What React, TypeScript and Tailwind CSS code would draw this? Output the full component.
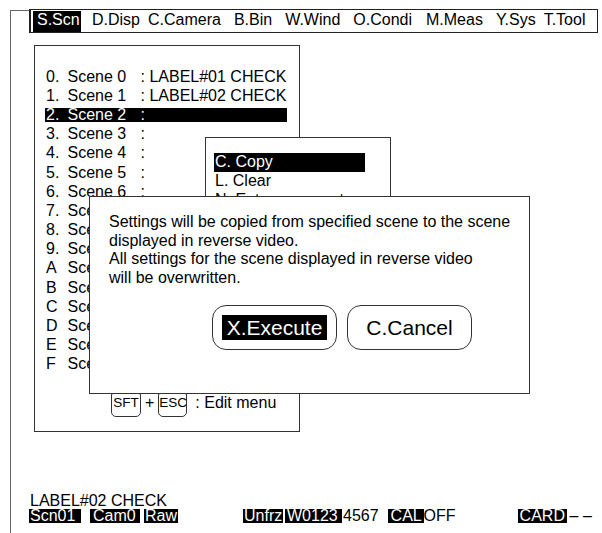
import React from "react";

const rows: { n: string; name: string; label: string }[] = [
  { n: "0.", name: "Scene 0", label: "LABEL#01 CHECK" },
  { n: "1.", name: "Scene 1", label: "LABEL#02 CHECK" },
  { n: "2.", name: "Scene 2", label: "" },
  { n: "3.", name: "Scene 3", label: "" },
  { n: "4.", name: "Scene 4", label: "" },
  { n: "5.", name: "Scene 5", label: "" },
  { n: "6.", name: "Scene 6", label: "" },
  { n: "7.", name: "Scene 7", label: "" },
  { n: "8.", name: "Scene 8", label: "" },
  { n: "9.", name: "Scene 9", label: "" },
  { n: "A", name: "Scene A", label: "" },
  { n: "B", name: "Scene B", label: "" },
  { n: "C", name: "Scene C", label: "" },
  { n: "D", name: "Scene D", label: "" },
  { n: "E", name: "Scene E", label: "" },
  { n: "F", name: "Scene F", label: "" },
];

export default function App() {
  return (
    <div className="relative w-[602px] h-[533px] overflow-hidden bg-white text-black font-['Liberation_Sans',Arial,sans-serif] text-[16px]">
      {/* outer frame */}
      <div className="ml-[10px] mt-[10px] w-[588px] h-[523px] border-l border-t border-[#666]">
        {/* menu bar */}
        <div className="ml-[18px] -mt-[2px] w-[569px] h-[24px] border border-l-2 border-[#222] bg-white flex items-start whitespace-pre">
          <div className="ml-[2px] mt-[1px] h-[21px] w-[48px] pl-[4px] leading-[17px] bg-black text-white">S.Scn</div>
          <div className="ml-[11px] mt-[1px] h-[21px] leading-[17px]">D.Disp</div>
          <div className="ml-[8px] mt-[1px] h-[21px] leading-[17px]">C.Camera</div>
          <div className="ml-[13px] mt-[1px] h-[21px] leading-[17px]">B.Bin</div>
          <div className="ml-[13px] mt-[1px] h-[21px] leading-[17px]">W.Wind</div>
          <div className="ml-[13px] mt-[1px] h-[21px] leading-[17px]">O.Condi</div>
          <div className="ml-[14px] mt-[1px] h-[21px] leading-[17px]">M.Meas</div>
          <div className="ml-[13px] mt-[1px] h-[21px] leading-[17px]">Y.Sys</div>
          <div className="ml-[8px] mt-[1px] h-[21px] leading-[17px]">T.Tool</div>
        </div>

        {/* scene panel */}
        <div className="ml-[23px] mt-[12px] w-[266px] h-[387px] border border-[#333] pl-[10px] pt-[21px]">
          <div className="flex flex-col">
            {rows.map((r, i) => (
              <div key={r.n} className="h-[19.2px] flex items-center">
                <div
                  className={
                    "h-[14px] leading-[14px] pl-[1px] flex whitespace-pre " +
                    (i === 2 ? "bg-black text-white w-[242px]" : "")
                  }
                >
                  <span className="w-[21.5px]">{r.n}</span>
                  <span className="w-[73px]">{r.name}</span>
                  <span>{r.label ? ": " + r.label : ":"}</span>
                </div>
              </div>
            ))}
          </div>
          <div className="mt-[19px] ml-[66px] flex items-start">
            <div className="h-[24px] w-[30px] border border-[#333] rounded-b-[5px] rounded-t-[2px] text-[13.5px] leading-[16px] pt-[1px] text-center">SFT</div>
            <div className="mx-[4px] leading-[19.2px]">+</div>
            <div className="h-[24px] w-[29px] border border-[#333] rounded-b-[5px] rounded-t-[2px] text-[13.5px] leading-[16px] pt-[1px] text-center">ESC</div>
            <div className="ml-[8px] leading-[19.2px] whitespace-pre">: Edit menu</div>
          </div>
        </div>

        {/* status area */}
        <div className="ml-[19px] mt-[62px] h-[14px] leading-[14px]">LABEL#02 CHECK</div>
        <div className="ml-[18px] mt-[1px] h-[14px] leading-[14px] flex whitespace-pre">
          <div className="w-[52px] pl-[1px] bg-black text-white">Scn01</div>
          <div className="ml-[9px] w-[50px] pl-[3px] bg-black text-white">Cam0</div>
          <div className="ml-[4px] w-[34px] pl-[1px] bg-black text-white">Raw</div>
          <div className="ml-[65px] w-[40px] pl-[1px] bg-black text-white">Unfrz</div>
          <div className="ml-[2px] w-[57px] pl-[2px] bg-black text-white">W0123</div>
          <div className="ml-[1px]">4567</div>
          <div className="ml-[9px] w-[36px] pl-[3px] bg-black text-white">CAL</div>
          <div>OFF</div>
          <div className="ml-[62px] w-[49px] pl-[2px] bg-black text-white">CARD</div>
          <div className="ml-[3px]">– –</div>
        </div>
      </div>

      {/* popup edit menu */}
      <div className="absolute left-[205px] top-[137px] z-10 w-[186px] h-[80px] border border-[#333] bg-white pl-[8px] pt-[15px] whitespace-pre">
        <div className="h-[19px] w-[151px] leading-[17px] pl-[1px] bg-black text-white">C. Copy</div>
        <div className="h-[19px] leading-[17px] pl-[1px]">L. Clear</div>
        <div className="h-[19px] leading-[17px] pl-[1px]">N. Enter comment</div>
      </div>

      {/* confirmation dialog */}
      <div className="absolute left-[89px] top-[196px] z-20 w-[441px] h-[198px] border border-[#333] bg-white pl-[19px] pt-[16px]">
        <div className="leading-[18.7px]">
          <div>Settings will be copied from specified scene to the scene</div>
          <div>displayed in reverse video.</div>
          <div>All settings for the scene displayed in reverse video</div>
          <div>will be overwritten.</div>
        </div>
        <div className="mt-[17px] ml-[103px] flex">
          <div className="w-[125px] h-[45px] rounded-[14px] border border-[#333] flex items-center justify-center text-[21px]">
            <div className="w-[105px] h-[25px] leading-[25px] bg-black text-white text-center">X.Execute</div>
          </div>
          <div className="ml-[10px] w-[125px] h-[45px] rounded-[14px] border border-[#333] flex items-center justify-center text-[21px]">
            <div className="leading-[25px]">C.Cancel</div>
          </div>
        </div>
      </div>
    </div>
  );
}
